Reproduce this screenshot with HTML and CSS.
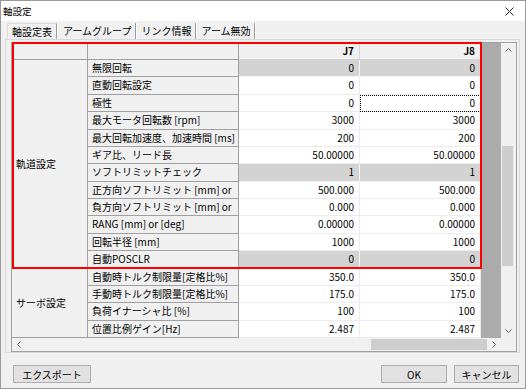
FILE: index.html
```html
<!DOCTYPE html>
<html lang="ja">
<head>
  <meta charset="UTF-8" />
  <title>軸設定</title>
  <link rel="stylesheet" href="styles.css">
</head>
<body>
  <div class="window">
    <div class="titlebar">
      <span class="title">軸設定</span>
      <svg class="close" width="9" height="9" viewBox="0 0 9 9"><path d="M0.5 0.5L8.5 8.5M8.5 0.5L0.5 8.5" stroke="#222" stroke-width="1"/></svg>
    </div>

    <div class="tabs">
      <div class="tab active">軸設定表</div>
      <div class="tab">アームグループ</div>
      <div class="tab">リンク情報</div>
      <div class="tab">アーム無効</div>
    </div>

    <div class="panel">
      <div class="grid">
        <div class="grid-body">
          <div class="cells">
            <!-- ヘッダー -->
            <div class="hd"></div>
            <div class="hd hd-name"></div>
            <div class="hd hd-col">J7</div>
            <div class="hd hd-col">J8</div>

            <!-- 軌道設定 -->
            <div class="group span-track">軌道設定</div>
            <div class="name">無限回転</div><div class="val ro">0</div><div class="val ro">0</div>
            <div class="name">直動回転設定</div><div class="val">0</div><div class="val">0</div>
            <div class="name">極性</div><div class="val">0</div><div class="val focus">0</div>
            <div class="name">最大モータ回転数 [rpm]</div><div class="val">3000</div><div class="val">3000</div>
            <div class="name">最大回転加速度、加速時間 [ms]</div><div class="val">200</div><div class="val">200</div>
            <div class="name">ギア比、リード長</div><div class="val">50.00000</div><div class="val">50.00000</div>
            <div class="name">ソフトリミットチェック</div><div class="val ro">1</div><div class="val ro">1</div>
            <div class="name">正方向ソフトリミット [mm] or</div><div class="val">500.000</div><div class="val">500.000</div>
            <div class="name">負方向ソフトリミット [mm] or</div><div class="val">0.000</div><div class="val">0.000</div>
            <div class="name">RANG [mm] or [deg]</div><div class="val">0.00000</div><div class="val">0.00000</div>
            <div class="name">回転半径 [mm]</div><div class="val">1000</div><div class="val">1000</div>
            <div class="name">自動POSCLR</div><div class="val ro">0</div><div class="val ro">0</div>

            <!-- サーボ設定 -->
            <div class="group span-servo">サーボ設定</div>
            <div class="name">自動時トルク制限量[定格比%]</div><div class="val">350.0</div><div class="val">350.0</div>
            <div class="name">手動時トルク制限量[定格比%]</div><div class="val">175.0</div><div class="val">175.0</div>
            <div class="name">負荷イナーシャ比 [%]</div><div class="val">100</div><div class="val">100</div>
            <div class="name">位置比例ゲイン[Hz]</div><div class="val">2.487</div><div class="val">2.487</div>
          </div>
          <div class="filler"></div>
          <div class="vscroll">
            <div class="sb-btn"><svg width="7" height="4" viewBox="0 0 7 4"><path d="M0.5 3.5L3.5 0.5L6.5 3.5" fill="none" stroke="#606060"/></svg></div>
            <div class="sb-track-v"><div class="thumb-v"></div></div>
            <div class="sb-btn"><svg width="7" height="4" viewBox="0 0 7 4"><path d="M0.5 0.5L3.5 3.5L6.5 0.5" fill="none" stroke="#606060"/></svg></div>
          </div>
        </div>
        <div class="hscroll">
          <div class="sb-btn-h"><svg width="4" height="7" viewBox="0 0 4 7"><path d="M3.5 0.5L0.5 3.5L3.5 6.5" fill="none" stroke="#606060"/></svg></div>
          <div class="sb-track-h"><div class="thumb-h"></div></div>
          <div class="sb-btn-h"><svg width="4" height="7" viewBox="0 0 4 7"><path d="M0.5 0.5L3.5 3.5L0.5 6.5" fill="none" stroke="#606060"/></svg></div>
          <div class="corner"></div>
        </div>
        <div class="highlight"></div>
      </div>
    </div>

    <div class="footer">
      <button class="btn btn-export">エクスポート</button>
      <div class="spacer"></div>
      <button class="btn btn-ok">OK</button>
      <button class="btn btn-cancel">キャンセル</button>
    </div>
  </div>
</body>
</html>
```

FILE: styles.css
```css
body {
  margin: 0;
  padding: 0;
  background-color: #f0f0f0;
  font-family: "Noto Sans CJK JP", "Noto Sans", sans-serif;
  font-size: 10px;
  color: #000;
}
.window {
  width: 526px;
  height: 389px;
  box-sizing: border-box;
  border: 1px solid #9a9a9a;
  background-color: #f0f0f0;
  overflow: hidden;
}
.titlebar {
  height: 20px;
  background: #fff;
  display: flex;
  align-items: center;
  padding-left: 2px;
  padding-right: 11px;
}
.title {
  font-size: 9.5px;
  flex: 1;
}
.close {
  display: block;
}
.tabs {
  display: flex;
  height: 16px;
  margin-top: 2px;
  padding-left: 6px;
}
.tab {
  padding: 0 3px 0 5px;
  line-height: 16px;
  border-right: 1px solid #9a9a9a;
  box-shadow: 1px 0 0 #fff;
  margin-right: 1px;
  white-space: nowrap;
}
.tab.active {
  border-top: 1px solid #dcdcdc;
  border-left: 1px solid #dcdcdc;
  line-height: 15px;
  padding-left: 4px;
  padding-right: 4px;
}
.panel {
  margin: 0 5px 0 4px;
  border: 1px solid #d9d9d9;
  padding: 2px 2px 0 5px;
  background-color: #f0f0f0;
}
.grid {
  position: relative;
  border: 1px solid #a0a0a0;
  background: #ababab;
}
.grid-body {
  display: flex;
}
.cells {
  display: grid;
  grid-template-columns: 76px 151px 121px 121px;
  grid-template-rows: 17px repeat(16, 17.375px);
  background: #fff;
}
.cells > div {
  box-sizing: border-box;
  white-space: nowrap;
  overflow: hidden;
}
.hd {
  background: #f0f0f0;
  border-right: 1px solid #a0a0a0;
  border-bottom: 1px solid #a0a0a0;
}
.hd-col {
  font-weight: bold;
  text-align: right;
  padding-right: 5px;
  line-height: 16px;
  border-right: 1px solid #d5d5d5;
  border-bottom: 1px solid #d5d5d5;
}
.group {
  background: #f0f0f0;
  border-right: 1px solid #a0a0a0;
  border-bottom: 1px solid #a0a0a0;
  display: flex;
  align-items: center;
  padding-left: 4px;
}
.span-track {
  grid-row: span 12;
}
.span-servo {
  grid-row: span 4;
}
.name {
  background: #f0f0f0;
  border-right: 1px solid #a0a0a0;
  border-bottom: 1px solid #a0a0a0;
  padding-left: 4px;
  line-height: 16px;
}
.val {
  background: #fff;
  border-right: 1px solid #ececec;
  border-bottom: 1px solid #ececec;
  text-align: right;
  padding-right: 5px;
  line-height: 16px;
}
.val.ro {
  background: #d3d3d3;
  border-right-color: #f4f4f4;
  border-bottom-color: #f4f4f4;
}
.val.focus {
  outline: 1px dotted #000;
  outline-offset: -1px;
}
.filler {
  flex: 1;
  background: #ababab;
}
.vscroll {
  width: 15px;
  display: flex;
  flex-direction: column;
  background: #f0f0f0;
}
.sb-btn {
  height: 14px;
  display: flex;
  align-items: center;
  justify-content: center;
}
.sb-track-v {
  flex: 1;
  padding-top: 89px;
}
.thumb-v {
  width: 11px;
  height: 120px;
  margin-left: 1px;
  background: #cdcdcd;
}
.hscroll {
  height: 13px;
  display: flex;
  background: #f0f0f0;
}
.sb-btn-h {
  width: 14px;
  display: flex;
  align-items: center;
  justify-content: center;
}
.sb-track-h {
  flex: 1;
  display: flex;
  justify-content: flex-end;
  align-items: center;
}
.thumb-h {
  width: 116px;
  height: 11px;
  background: #cdcdcd;
}
.corner {
  width: 15px;
}
.highlight {
  position: absolute;
  left: 0;
  top: -1px;
  width: 470px;
  height: 227px;
  box-sizing: border-box;
  border: 2px solid #ff0000;
  pointer-events: none;
}
.footer {
  display: flex;
  padding: 12px 6px 0 12px;
  gap: 7px;
}
.spacer {
  flex: 1;
}
.btn {
  height: 18px;
  padding: 0;
  background: #e1e1e1;
  border: 1px solid #adadad;
  font-family: "Noto Sans CJK JP", "Noto Sans", sans-serif;
  font-size: 10px;
  color: #000;
}
.btn-export {
  width: 78px;
}
.btn-ok {
  width: 66px;
}
.btn-cancel {
  width: 65px;
}
```
